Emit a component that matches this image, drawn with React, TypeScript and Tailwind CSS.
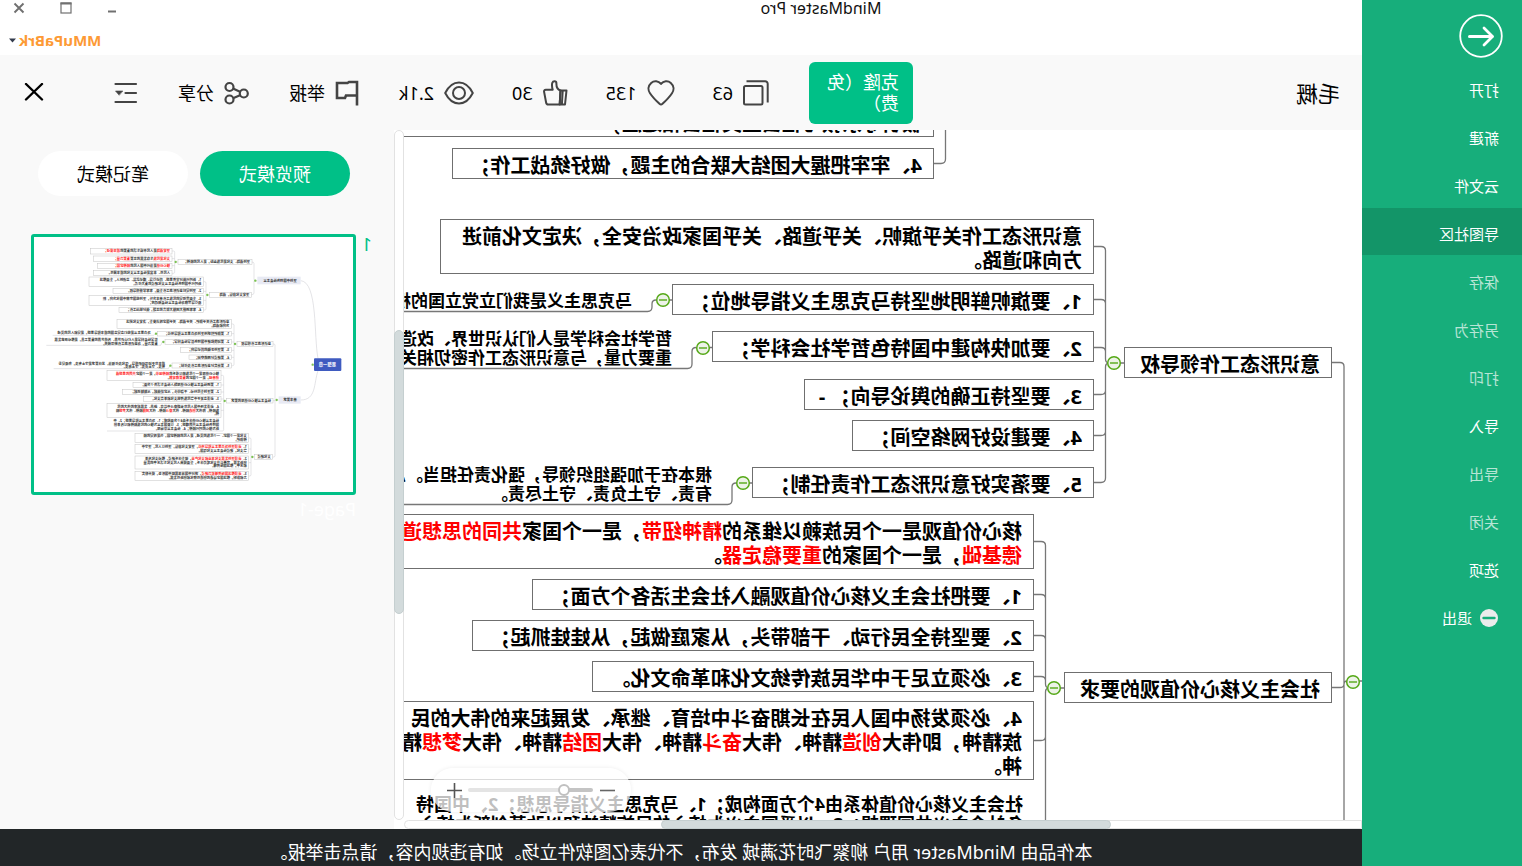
import React from 'react';

type Piece = string | { red: string };

const FONT = 'font-["Noto_Sans","Noto_Sans_CJK_SC",sans-serif]';

const menuItems = [
  { label: '打开', dim: false, active: false },
  { label: '新建', dim: false, active: false },
  { label: '云文件', dim: false, active: false },
  { label: '导图社区', dim: false, active: true },
  { label: '保存', dim: true, active: false },
  { label: '另存为', dim: true, active: false },
  { label: '打印', dim: true, active: false },
  { label: '导入', dim: false, active: false },
  { label: '导出', dim: true, active: false },
  { label: '关闭', dim: true, active: false },
  { label: '选项', dim: false, active: false },
];

function Sidebar() {
  return (
    <nav className="flex w-40 shrink-0 flex-col bg-[#17ae7b] text-[15px] text-white">
      <div className="flex h-16 shrink-0 items-center pt-2 pl-[19px]">
        <button type="button" aria-label="返回">
          <svg width="44" height="44" viewBox="0 0 44 44" fill="none" stroke="white" className="block">
            <circle cx="22" cy="22" r="20.8" strokeWidth="1.8" />
            <path d="M33.5 22.5H11" strokeWidth="3" strokeLinecap="round" />
            <path d="M19 14l-8.500 8.500L19 31" strokeWidth="2.800" strokeLinecap="round" strokeLinejoin="round" />
          </svg>
        </button>
      </div>
      {menuItems.map((m) => (
        <button
          key={m.label}
          type="button"
          className={`flex h-12 shrink-0 items-center pl-[23px] text-left ${m.active ? 'border-b border-[#17ae7b] bg-[#139568] bg-clip-padding pt-[5px]' : 'pt-1'} ${m.dim ? 'text-white/70' : ''}`}
        >
          {m.label}
        </button>
      ))}
      <button type="button" className="flex h-12 shrink-0 items-center gap-2 pt-1 pl-6 text-left">
        <svg width="18" height="18" viewBox="0 0 18 18">
          <circle cx="9" cy="9" r="9" fill="#ececec" />
          <path d="M3.500 9h11" stroke="#17ae7b" strokeWidth="2.400" strokeLinecap="round" />
        </svg>
        退出
      </button>
    </nav>
  );
}

function TitleBar() {
  return (
    <header className="flex h-[55px] shrink-0 flex-col bg-white">
      <div className="flex h-4 items-center">
        <h1 className="flex-1 text-center text-base leading-4 text-[#111]">MindMaster Pro</h1>
        <div className="flex h-[13px] w-[280px] items-center justify-end gap-[35px] pr-[13px]">
          <button type="button" aria-label="最小化">
            <svg width="10" height="12" viewBox="0 0 10 12" className="block">
              <path d="M1 9.500h8" stroke="#707070" strokeWidth="2" />
            </svg>
          </button>
          <button type="button" aria-label="最大化">
            <svg width="12" height="12" viewBox="0 0 12 12" className="block">
              <rect x="1" y="1" width="10" height="10" fill="none" stroke="#707070" strokeWidth="1.200" />
              <path d="M.5 1.500h11" stroke="#707070" strokeWidth="2" />
            </svg>
          </button>
          <button type="button" aria-label="关闭窗口">
            <svg width="12" height="12" viewBox="0 0 12 12" className="block">
              <path d="M1.500 1.500l9 9M10.500 1.500l-9 9" stroke="#707070" strokeWidth="1.900" />
            </svg>
          </button>
        </div>
      </div>
      <button type="button" className="mt-3 flex items-center gap-[3px] self-end pr-[9px] text-[15px] leading-6 font-bold text-[#fd9a35]">
        MMuPaBrk
        <svg width="7" height="5" viewBox="0 0 7 5">
          <path d="M0 .5h7L3.500 4.500z" fill="#333c4d" />
        </svg>
      </button>
    </header>
  );
}

const toolBtn = 'flex items-center gap-[10px] leading-6';

function Toolbar() {
  return (
    <div className="flex h-[75px] shrink-0 items-center gap-10 bg-[#f9f9f9] pr-6 pl-[22px] text-lg text-black">
      <h2 className="mr-auto text-[22px] leading-8">毛概</h2>
      <button type="button" className="h-[62px] w-[104px] rounded-md bg-[#00c087] px-[14px] text-left leading-[21px] text-white">
        克隆（免费）
      </button>
      <div className="flex items-center gap-[38px]">
        <button type="button" className={toolBtn}>
          <svg width="26" height="26" viewBox="0 0 26 26" fill="none" stroke="#444" strokeWidth="2">
            <rect x="6.500" y="6" width="18.500" height="18.500" rx="1.500" />
            <path d="M22.500 1.200H3.800a2.500 2.500 0 0 0-2.500 2.500V22.500" />
          </svg>
          63
        </button>
        <button type="button" className={toolBtn}>
          <svg width="28" height="26" viewBox="0 0 28 26" fill="none" stroke="#444" strokeWidth="2" strokeLinejoin="round">
            <path d="M14 3.900C11.500.9 7.200.3 4.200 2.900 1 5.700.7 9.800 3 13.200c2.500 3.800 6.500 7.800 9.500 10.600q1.500 1.300 3 0c3-2.800 7-6.800 9.500-10.600 2.300-3.400 2-7.500-1.200-10.300C20.800.3 16.500.9 14 3.900z" />
          </svg>
          135
        </button>
        <button type="button" className={toolBtn}>
          <svg width="25" height="26" viewBox="0 0 25 26" fill="none" stroke="#444" strokeWidth="2" strokeLinejoin="round">
            <path d="M1.500 10.500h6l.8 14H3z" />
            <path d="M5.300 10.500l.8 14" />
            <path d="M7.500 10.500c2.800-.8 4.300-3.500 4.100-7.500.1-2.300 3.300-2.400 4.100-.2.600 2.200.2 4.900-.4 6.900h6.900c1.300 0 1.900.9 1.700 2.100l-2 10.700c-.2 1.200-.9 2-2.100 2H8.300z" />
          </svg>
          30
        </button>
        <button type="button" className={toolBtn}>
          <svg width="30" height="24" viewBox="0 0 30 24" fill="none" stroke="#444" strokeWidth="2">
            <path d="M1.200 12C4 6.500 9 1.500 15 1.500S26 6.500 28.800 12C26 17.500 21 22.500 15 22.500S4 17.500 1.200 12z" strokeLinejoin="round" />
            <circle cx="15" cy="12" r="6" />
          </svg>
          2.1k
        </button>
      </div>
      <button type="button" className={toolBtn}>
        <svg width="24" height="26" viewBox="0 0 24 26" fill="none" stroke="#444" strokeWidth="2.600">
          <path d="M2 25.500V2h8l1.500 1H22v15H14l-1-2.500H2" />
        </svg>
        举报
      </button>
      <button type="button" className={toolBtn}>
        <svg width="25" height="24" viewBox="0 0 25 24" fill="none" stroke="#444" strokeWidth="2.200">
          <circle cx="5.200" cy="12.500" r="4" />
          <circle cx="19.500" cy="6" r="4" />
          <circle cx="19.500" cy="18.500" r="4" />
          <path d="M9 10.800l7-3.200M9 14.200l7 3" />
        </svg>
        分享
      </button>
      <button type="button" aria-label="目录">
        <svg width="24" height="22" viewBox="0 0 24 22" className="block" stroke="#444" strokeWidth="2.200" strokeLinecap="round">
          <path d="M2 2h20.500M2 11h10.500M2 20h20.500" />
          <path d="M15.500 9h7l-3.500 4z" fill="#444" strokeWidth=".6" />
        </svg>
      </button>
      <button type="button" aria-label="关闭" className="ml-[30px]">
        <svg width="20" height="20" viewBox="0 0 20 20" className="block" stroke="black" strokeWidth="2.400" strokeLinecap="round">
          <path d="M2 1l16 15.500M18 1L2 16.500" />
        </svg>
      </button>
    </div>
  );
}

const nodes: { pos: string; lines: Piece[][] }[] = [
  { pos: 'left-[428px] -top-6 w-[560px]', lines: [['极引导宗教与社会主义社会相适应；']] },
  { pos: 'left-[428px] top-[18px] w-[482px]', lines: [['4、牢牢把握大团结大联合的主题，做好统战工作；']] },
  { pos: 'left-[268px] top-[89px] w-[654px]', lines: [['意识形态工作关乎旗帜、关乎道路、关乎国家政治安全，决定文化前进'], ['方向和道路。']] },
  { pos: 'left-[268px] top-[154px] w-[422px]', lines: [['1、要旗帜鲜明地坚持马克思主义指导地位；']] },
  { pos: 'left-[268px] top-[201px] w-[382px]', lines: [['2、要加快构建中国特色哲学社会科学；']] },
  { pos: 'left-[268px] top-[249px] w-[290px]', lines: [['3、要坚持正确的舆论导向； -']] },
  { pos: 'left-[268px] top-[290px] w-[242px]', lines: [['4、要建设好网络空间；']] },
  { pos: 'left-[268px] top-[337px] w-[342px]', lines: [['5、要落实好意识形态工作责任制；']] },
  { pos: 'left-[30px] top-[217px] w-[208px]', lines: [['意识形态工作领导权']] },
  { pos: 'left-[30px] top-[542px] w-[268px]', lines: [['社会主义核心价值观的要求']] },
  {
    pos: 'left-[328px] top-[384px] w-[654px]',
    lines: [
      ['核心价值观是一个民族赖以维系的', { red: '精神纽带' }, '，是一个国家', { red: '共同的思想道' }],
      [{ red: '德基础' }, '，是一个国家的', { red: '重要稳定器' }, '。'],
    ],
  },
  { pos: 'left-[328px] top-[449px] w-[502px]', lines: [['1、要把社会主义核心价值观融入社会生活各个方面；']] },
  { pos: 'left-[328px] top-[490px] w-[562px]', lines: [['2、要坚持全民行动、干部带头，从家庭做起，从娃娃抓起；']] },
  { pos: 'left-[328px] top-[531px] w-[442px]', lines: [['3、必须立足于中华民族传统文化和革命文化。']] },
  {
    pos: 'left-[328px] top-[571px] w-[654px]',
    lines: [
      ['4、必须发扬中国人民在长期奋斗中培育、继承、发展起来的伟大的民'],
      ['族精神，即伟大', { red: '创造' }, '精神、伟大', { red: '奋斗' }, '精神、伟大', { red: '团结' }, '精神、伟大', { red: '梦想' }, '精'],
      ['神。'],
    ],
  },
];

const notes: { pos: string; lines: string[] }[] = [
  { pos: 'left-[730px] top-[161px] text-[17px] leading-[19px]', lines: ['马克思主义是我们立党立国的根本指导思想'] },
  { pos: 'left-[690px] top-[199px] text-[17px] leading-[19px]', lines: ['哲学社会科学是人们认识世界、改造世界', '重要力量，与意识形态工作密切相关，'] },
  { pos: 'left-[650px] top-[335px] text-[17px] leading-[19px]', lines: ['根本在于加强组织领导，强化责任担当。总', '有责、守土负责、守土尽责。'] },
  {
    pos: 'left-[339px] top-[664px] text-lg leading-5',
    lines: ['社会主义核心价值体系由4个方面构成；1、马克思主义指导思想；2、中国特', '色社会主义共同理想；3、以爱国主义为核心的民族精神和以改革创新为核心'],
  },
];

const toggles = [
  [9, 552],
  [248, 233],
  [308, 558],
  [699, 170],
  [659, 218],
  [619, 353],
];

function Line({ pieces }: { pieces: Piece[] }) {
  return (
    <p className="whitespace-nowrap">
      {pieces.map((p, i) =>
        typeof p === 'string' ? <span key={i}>{p}</span> : <span key={i} className="text-[#ff0000]">{p.red}</span>,
      )}
    </p>
  );
}

function Canvas() {
  return (
    <div className="relative min-w-0 flex-1 overflow-hidden bg-white font-bold text-black">
      <svg className="absolute inset-0 h-full w-full" fill="none" stroke="#777" strokeWidth="1.300">
        <path d="M416.500 0V29q0 4.500 4.500 4.500H428" />
        <path d="M0 551H3M30 232.500H22q-4 0-4 4V690M15 551q3 0 3 3q0 3.500 4 3.500H30" />
        <path d="M268 116.500H261q-4.500 0-4.500 4V229q0 4-4 4M268 169.500H261q-4.500 0-4.500 4M268 217.500H261q-4.500 0-4.500 4M238 233H241M252.500 233q4 0 4 4V348q0 4.500 4.500 4.500H268M268 264.500H261q-4.500 0-4.500-4M268 305.500H261q-4.500 0-4.500-4" />
        <path d="M328 411.500H321q-4.500 0-4.500 4V554q0 4-4 4M328 464.500H321q-4.500 0-4.500 4M328 505.500H321q-4.500 0-4.500 4M328 546.500H321q-4.500 0-4.500 4M298 558H301M312.500 558q4 0 4 4V690M328 610.500H321q-4.500 0-4.500-4" />
        <path d="M690 170H693M706 170q4 0 4 4v3q0 4.500 4.500 4.500H2400" />
        <path d="M650 217.500H653M666 217.500q4 0 4 4V234q0 4.500 4.500 4.500H2400" />
        <path d="M610 353H613M626 353q4 0 4 4V370q0 4.500 4.500 4.500H2400" />
      </svg>
      {nodes.map((n, i) => (
        <div key={i} className={`absolute border border-[#6f6f6f] bg-white px-[11px] pt-[5px] text-xl leading-6 ${n.pos}`}>
          {n.lines.map((l, j) => (
            <Line key={j} pieces={l} />
          ))}
        </div>
      ))}
      {notes.map((n, i) => (
        <div key={i} className={`absolute whitespace-nowrap ${n.pos}`}>
          {n.lines.map((l) => (
            <p key={l}>{l}</p>
          ))}
        </div>
      ))}
      <svg className="absolute inset-0 h-full w-full" stroke="#55a817">
        {toggles.map(([x, y]) => (
          <g key={`${x}-${y}`}>
            <circle cx={x} cy={y} r="6.300" fill="#edf3e8" strokeWidth="1.500" />
            <path d={`M${x - 4} ${y}h8`} strokeWidth="1.400" />
          </g>
        ))}
      </svg>
      <div className="absolute right-[27px] bottom-2 flex h-11 w-[200px] items-center justify-between rounded-full bg-white/75 px-4 shadow-[0_0_4px_rgba(0,0,0,0.08)]">
        <button type="button" aria-label="缩小">
          <svg width="15" height="15" viewBox="0 0 15 15" className="block" stroke="#666" strokeWidth="1.600">
            <path d="M0 7.500h15" />
          </svg>
        </button>
        <input
          type="range"
          aria-label="缩放"
          defaultValue={21}
          className="h-1 w-[125px] appearance-none rounded-full bg-[linear-gradient(to_right,#c4c4c4_24%,#e4e4e4_24%)] [&::-webkit-slider-thumb]:h-3 [&::-webkit-slider-thumb]:w-3 [&::-webkit-slider-thumb]:appearance-none [&::-webkit-slider-thumb]:rounded-full [&::-webkit-slider-thumb]:border-2 [&::-webkit-slider-thumb]:border-solid [&::-webkit-slider-thumb]:border-[#c0c0c0] [&::-webkit-slider-thumb]:bg-white"
        />
        <button type="button" aria-label="放大">
          <svg width="15" height="15" viewBox="0 0 15 15" className="block" stroke="#555" strokeWidth="1.600">
            <path d="M0 7.500h15M7.500 0v15" />
          </svg>
        </button>
      </div>
    </div>
  );
}

type Mini = { x: number; y: number; w: number; h: number; lines: Piece[][]; fill?: string; bare?: boolean };

const minis: Mini[] = [
  { x: 157, y: 119, w: 130, h: 23, fill: '#e8eaf4', lines: [['坚持中国特色社会主义']] },
  { x: 157, y: 478, w: 66, h: 22, fill: '#e8eaf4', lines: [['基本要求']] },
  { x: 303, y: 67, w: 222, h: 16, lines: [['坚持道路、文化是民族血脉，是人民的精神；']] },
  { x: 305, y: 167, w: 125, h: 14, lines: [['坚定文化自信，道路']] },
  { x: 543, y: 34, w: 245, h: 17, lines: [[{ red: '坚定道路' }, '是人民幸福生活的重要的', { red: '根本保证；' }]] },
  { x: 543, y: 57, w: 235, h: 16, lines: [[{ red: '文化是民族' }, '生存发展的主要', { red: '重要力量；' }]] },
  { x: 543, y: 79, w: 224, h: 15, lines: [[{ red: '核心价值' }, '是当代中国人民的', { red: '精神家园；' }]] },
  { x: 543, y: 100, w: 235, h: 15, lines: [['人民性、丰富是社会主义文化的根本属性。']] },
  { x: 449, y: 120, w: 343, h: 29, lines: [['1、新时代做好宣传思想、舆论引导、理论武装、立德树人，全面推进'], ['新时代中国特色社会主义文化建设的重大任务。']] },
  { x: 449, y: 155, w: 271, h: 15, lines: [['2、坚持党对意识形态工作全面，牢牢掌握领导权。']] },
  { x: 449, y: 176, w: 343, h: 29, lines: [['3、全面贯彻党的民族工作基本方针，坚持我国宗教中国化方向，积'], ['极引导宗教与社会主义社会相适应；']] },
  { x: 449, y: 211, w: 253, h: 15, lines: [['4、牢牢把握大团结大联合的主题，做好统战工作；']] },
  { x: 240, y: 314, w: 108, h: 14, lines: [['意识形态工作领导权']] },
  { x: 240, y: 484, w: 139, h: 14, lines: [['社会主义核心价值观的要求']] },
  { x: 241, y: 653, w: 55, h: 14, lines: [['文化建设']] },
  { x: 365, y: 247, w: 343, h: 28, lines: [['意识形态工作关乎旗帜、关乎道路、关乎国家政治安全，决定文化前进'], ['方向和道路。']] },
  { x: 365, y: 283, w: 221, h: 14, lines: [['1、要旗帜鲜明地坚持马克思主义指导地位；']] },
  { x: 365, y: 307, w: 199, h: 15, lines: [['2、要加快构建中国特色哲学社会科学；']] },
  { x: 365, y: 332, w: 153, h: 15, lines: [['3、要坚持正确的舆论导向；']] },
  { x: 365, y: 354, w: 127, h: 14, lines: [['4、要建设好网络空间；']] },
  { x: 365, y: 378, w: 178, h: 15, lines: [['5、要落实好意识形态工作责任制；']] },
  { x: 601, y: 282, w: 290, h: 13, bare: true, lines: [['马克思主义是我们立党立国的根本指导思想，是党和人民的灵魂']] },
  { x: 580, y: 303, w: 330, h: 21, bare: true, lines: [['哲学社会科学是人们认识世界、改造世界的重要工具，是推动历史发展'], ['重要力量，与意识形态工作密切相关。']] },
  { x: 558, y: 374, w: 330, h: 21, bare: true, lines: [['根本在于加强组织领导，强化责任担当。总体要求是守土有责，各级党委'], ['有责、守土负责、守土尽责。']] },
  {
    x: 396, y: 401, w: 342, h: 29,
    lines: [['核心价值观是一个民族赖以维系的', { red: '精神纽带' }, '，是一个国家', { red: '共同的思想道' }], [{ red: '德基础' }, '，是一个国家的', { red: '重要稳定器' }, '。']],
  },
  { x: 396, y: 437, w: 264, h: 14, lines: [['1、要把社会主义核心价值观融入社会生活各个方面；']] },
  { x: 396, y: 457, w: 295, h: 15, lines: [['2、要坚持全民行动、干部带头，从家庭做起，从娃娃抓起；']] },
  { x: 396, y: 478, w: 232, h: 15, lines: [['3、必须立足于中华民族传统文化和革命文化。']] },
  {
    x: 396, y: 500, w: 342, h: 41,
    lines: [
      ['4、必须发扬中国人民在长期奋斗中培育、继承、发展起来的伟大的民'],
      ['族精神，即伟大', { red: '创造' }, '精神、伟大', { red: '奋斗' }, '精神、伟大', { red: '团结' }, '精神、伟大', { red: '梦想' }, '精'],
      ['神。'],
    ],
  },
  {
    x: 396, y: 546, w: 342, h: 35, bare: true,
    lines: [['社会主义核心价值体系由4个方面构成；1、马克思主义指导思想；2、中'], ['国特色社会主义共同理想；3、以爱国主义为核心的民族精神和以改革创'], ['新为核心的时代精神；4、社会主义荣辱观。']],
  },
  { x: 313, y: 589, w: 341, h: 27, lines: [['文化是一个国家、一个民族的灵魂，是人民的精神家园，也是政党的精'], ['神旗帜。']] },
  { x: 313, y: 622, w: 341, h: 28, lines: [['1、', { red: '必须坚持马克思主义指导地位' }, '，坚定文化自信，坚持以人民，坚守中'], ['华文化，建设社会主义文化强国。']] },
  { x: 313, y: 657, w: 341, h: 39, lines: [['2、', { red: '必须坚持发展文化事业和文化产业' }, '，健全体系建设，推动文化改革'], ['创新发展，完善公共文化服务体系，全面提高人民文化生活水平的质量'], ['和水平，推进国际传播。']] },
  { x: 313, y: 703, w: 341, h: 28, lines: [['3、', { red: '必须推进国际传播能力建设' }, '，讲好中国故事展现中国形象，提升软实'], ['力和影响，推进国家话语的创造性转化和创新性发展。']] },
];

function Thumbnail() {
  return (
    <svg viewBox="0 0 957 765" className="block w-full bg-white" fontSize="10" fontWeight="bold" strokeWidth="1.500">
      <g fill="none" stroke="#c9c9cf">
        <path d="M105 364C118 300 105 135 157 131M105 401C118 440 110 489 157 489" />
        <path d="M287 131H292q5 0 5-5V80q0-5 6-5M297 131V168q0 5 8 5M525 75H532M543 42H538q-3 0-3 4V106q0 3 4 3h4M535 65h8M535 86h8M430 174H438M449 134h-4q-4 0-4 4V216q0 3 4 3h4M441 163h8M441 190h8" />
        <path d="M223 489H232M240 321h-3q-3 0-3 4V656q0 4 4 4h3M234 491h6M348 321H356M365 261h-4q-4 0-4 4V382q0 4 4 4h4M357 290h8M357 315h8M357 340h8M357 361h8" />
        <path d="M379 491H386M396 415h-4q-4 0-4 4V578q0 4 4 4H738M388 444h8M388 465h8M388 486h8M388 520h8M296 660H304M313 603h-4q-3 0-3 4V713q0 4 4 4h3M306 636h7M306 677h7" />
        <path d="M586 290h8l4 5H901M564 315h8l5 10H920M543 386h6l5 9H898" />
      </g>
      {minis.map((m, i) => {
        const step = m.lines.length > 1 ? 11 : 0;
        const first = m.y + m.h / 2 + 3.5 - (step * (m.lines.length - 1)) / 2;
        return (
          <g key={i}>
            {!m.bare && <rect x={m.x} y={m.y} width={m.w} height={m.h} fill={m.fill ?? 'white'} stroke={m.fill ? 'none' : '#c4c4c4'} />}
            {m.lines.map((l, j) => (
              <text key={j} x={m.x + (m.fill ? 12 : 6)} y={first + j * step}>
                {l.map((p, k) => (
                  <tspan key={k} fill={typeof p === 'string' ? '#333' : '#ff2020'}>
                    {typeof p === 'string' ? p : p.red}
                  </tspan>
                ))}
              </text>
            ))}
          </g>
        );
      })}
      <g fill="#7cc352">
        <circle cx="121" cy="383" r="3.500" />
        <circle cx="293" cy="131" r="3.500" />
        <circle cx="532" cy="75" r="3.500" />
        <circle cx="437" cy="174" r="3.500" />
        <circle cx="229" cy="489" r="3.500" />
        <circle cx="354" cy="321" r="3.500" />
        <circle cx="385" cy="492" r="3.500" />
        <circle cx="302" cy="660" r="3.500" />
        <circle cx="591" cy="290" r="3.500" />
        <circle cx="569" cy="315" r="3.500" />
        <circle cx="548" cy="386" r="3.500" />
      </g>
      <rect x="35" y="364" width="82" height="38" rx="3" fill="#3f5bc0" />
      <text x="51" y="388" fontSize="13" fill="white">思想一章</text>
    </svg>
  );
}

function PreviewPanel() {
  return (
    <aside className="flex w-[394px] shrink-0 flex-col bg-[#f9f9f9] pt-[21px]">
      <div className="flex gap-3 pl-11 text-lg">
        <button type="button" className="h-[45px] w-[150px] rounded-full bg-[#00c087] text-white">
          预览模式
        </button>
        <button type="button" className="h-[45px] w-[150px] rounded-full bg-white text-black">
          笔记模式
        </button>
      </div>
      <div className="mt-[38px] flex pl-[22px]">
        <span className="w-4 text-lg leading-5 text-[#00c087]">1</span>
        <figure className="w-[325px]">
          <div className="rounded-[3px] border-[3px] border-[#00c087]">
            <Thumbnail />
          </div>
          <figcaption className="text-lg leading-7 text-white">Page-1</figcaption>
        </figure>
      </div>
    </aside>
  );
}

export default function App() {
  return (
    <div className={`flex h-screen -scale-x-100 overflow-hidden bg-white ${FONT}`}>
      <Sidebar />
      <div className="flex min-w-0 flex-1 flex-col">
        <TitleBar />
        <Toolbar />
        <div className="flex min-h-0 flex-1">
          <main className="flex min-w-0 flex-1 flex-col">
            <div className="flex min-h-0 flex-1">
              <Canvas />
              <div className="flex w-[10px] shrink-0 flex-col rounded-full border border-[#e2e2e2] bg-white">
                <div className="flex-[200]" />
                <div className="-mx-px flex-[283] rounded-full border border-[#c5cfd0] bg-[#d3dbdc]" />
                <div className="flex-[206]" />
              </div>
            </div>
            <div className="mr-[10px] flex h-[9px] shrink-0 rounded-r-full border border-[#e2e2e2] bg-white">
              <div className="flex-[251]" />
              <div className="-my-px flex-[450] rounded-full border border-[#c5cfd0] bg-[#d3dbdc]" />
              <div className="flex-[257]" />
            </div>
          </main>
          <PreviewPanel />
        </div>
        <footer className="h-[37px] shrink-0 bg-[#222628] pt-[9px] text-center text-lg leading-7 text-white">
          本作品由 MindMaster 用户 柳絮飞时花满城 发布，不代表亿图软件立场。如有违规内容，请点击举报。
        </footer>
      </div>
    </div>
  );
}
